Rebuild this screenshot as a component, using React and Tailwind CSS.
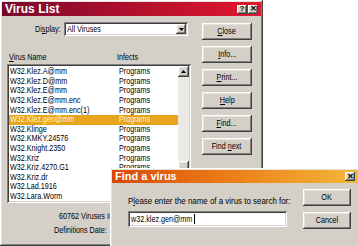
import React from 'react';

const RAISED = 'shadow-[inset_-1px_-1px_#404040,inset_1px_1px_#ffffff,inset_-2px_-2px_#808080,inset_2px_2px_#e4e2dc]';
const SUNKEN = 'shadow-[inset_1px_1px_#808080,inset_-1px_-1px_#ffffff,inset_2px_2px_#404040,inset_-2px_-2px_#d4d0c8]';

const VIRUSES = [
  'W32.Klez.A@mm',
  'W32.Klez.D@mm',
  'W32.Klez.E@mm',
  'W32.Klez.E@mm.enc',
  'W32.Klez.E@mm.enc(1)',
  'W32.Klez.gen@mm',
  'W32.Klinge',
  'W32.KMKY.24576',
  'W32.Knight.2350',
  'W32.Kriz',
  'W32.Kriz.4270.G1',
  'W32.Kriz.dr',
  'W32.Lad.1916',
  'W32.Lara.Worm',
];

// old screenshot text is narrow: squeeze it horizontally
function T({ children, center }) {
  return (
    <span className={`inline-block whitespace-nowrap scale-x-[0.8] ${center ? 'origin-center' : 'origin-left'}`}>
      {children}
    </span>
  );
}

function Btn({ children, className = '' }) {
  return (
    <div className={`flex items-center justify-center bg-[#d4d0c8] text-black ${RAISED} ${className}`}>
      <T center>{children}</T>
    </div>
  );
}

function TitleBtn({ children }) {
  return (
    <div className={`w-[10px] h-[9px] bg-[#d4d0c8] flex items-center justify-center text-[8px] font-bold leading-none text-black ${RAISED}`}>
      {children}
    </div>
  );
}

export default function App() {
  return (
    <div
      className="relative w-[358px] h-[246px] bg-white overflow-hidden text-[9px] leading-none text-black"
      style={{ fontFamily: '"Liberation Sans", Arial, sans-serif' }}
    >
      {/* Virus List window */}
      <div className={`w-[263px] h-[246px] bg-[#d4d0c8] p-[2px] flex flex-col ${RAISED}`}>
        <div className="h-[14px] flex items-center justify-between px-[3px] bg-gradient-to-r from-[#78082c] via-[#b0102c] to-[#e3162c]">
          <span className="text-white font-bold text-[12px] leading-none">Virus List</span>
          <div className="flex gap-[1px]">
            <TitleBtn>?</TitleBtn>
            <TitleBtn>✕</TitleBtn>
          </div>
        </div>

        <div className="flex flex-1">
          {/* left column */}
          <div className="w-[190px] flex flex-col pl-[5px]">
            <div className="flex items-center mt-[6px] h-[14px]">
              <div className="w-[57px] pl-[28px]">
                <T>Di<u>s</u>play:</T>
              </div>
              <div className={`w-[124px] h-[14px] bg-white flex items-center justify-between pl-[3px] pr-[2px] ${SUNKEN}`}>
                <T>All Viruses</T>
                <div className={`w-[10px] h-[10px] bg-[#d4d0c8] flex items-center justify-center ${RAISED}`}>
                  <svg width="5" height="3" viewBox="0 0 5 3"><path d="M0 0h5L2.5 3z" fill="#000" /></svg>
                </div>
              </div>
            </div>

            <div className="flex mt-[16px] h-[11px] items-center">
              <div className="w-[110px] pl-[2px]"><T><u>V</u>irus Name</T></div>
              <T>Infects</T>
            </div>

            <div className={`mt-[1px] h-[139px] w-[184px] bg-white p-[2px] flex ${SUNKEN}`}>
              <div className="flex-1 pt-[1px] overflow-hidden">
                {VIRUSES.map((v, i) => (
                  <div
                    key={v}
                    className={`flex h-[9.6px] items-center ${i === 5 ? 'bg-[#e8a41c] text-[#fff4d8]' : ''}`}
                  >
                    <div className="w-[110px] pl-[1px]"><T>{v}</T></div>
                    <T>Programs</T>
                  </div>
                ))}
              </div>
              <div className="w-[11px] flex flex-col bg-[#ebe9e4]">
                <div className={`h-[11px] bg-[#d4d0c8] flex items-center justify-center ${RAISED}`}>
                  <svg width="5" height="3" viewBox="0 0 5 3"><path d="M2.5 0L5 3H0z" fill="#000" /></svg>
                </div>
                <div className="flex-1" />
                <div className={`h-[10px] bg-[#d4d0c8] ${RAISED}`} />
                <div className="h-[30px]" />
              </div>
            </div>

            <div className="mt-[9px] ml-[47px] flex flex-col gap-[5px]">
              <div className="pl-[5px]"><T>60762 Viruses In List</T></div>
              <div><T>Definitions Date:</T></div>
            </div>
          </div>

          {/* buttons */}
          <div className="flex flex-col gap-[6px] pt-[7px] pl-[10px]">
            <Btn className="w-[50px] h-[17px]"><u>C</u>lose</Btn>
            <Btn className="w-[50px] h-[17px]"><u>I</u>nfo...</Btn>
            <Btn className="w-[50px] h-[17px]"><u>P</u>rint...</Btn>
            <Btn className="w-[50px] h-[17px]"><u>H</u>elp</Btn>
            <Btn className="w-[50px] h-[17px]"><u>F</u>ind...</Btn>
            <Btn className="w-[50px] h-[17px]">Find <u>n</u>ext</Btn>
          </div>
        </div>
      </div>

      {/* Find a virus dialog */}
      <div className={`absolute left-[110px] top-[168px] w-[250px] h-[84px] bg-[#d4d0c8] p-[2px] flex flex-col ${RAISED}`}>
        <div className="h-[13px] flex items-center justify-between px-[3px] bg-gradient-to-r from-[#d84808] via-[#ec8018] to-[#f2b838]">
          <span className="text-white font-bold text-[11px] leading-none">Find a virus</span>
          <TitleBtn>✕</TitleBtn>
        </div>
        <div className="flex flex-1">
          <div className="w-[172px] flex flex-col pl-[16px] pt-[14px]">
            <span className="inline-block whitespace-nowrap origin-left scale-x-[0.88]">
              P<u>l</u>ease enter the name of a virus to search for:
            </span>
            <div className={`mt-[5px] w-[159px] h-[16px] bg-white flex items-center pl-[3px] ${SUNKEN}`}>
              <T>w32.klez.gen@mm</T>
              <span className="w-[1px] h-[10px] bg-black -ml-[14px]" />
            </div>
          </div>
          <div className="flex flex-col gap-[6px] pt-[6px] ml-auto pr-[7px]">
            <Btn className="w-[48px] h-[17px]">OK</Btn>
            <Btn className="w-[48px] h-[17px]">Cancel</Btn>
          </div>
        </div>
      </div>
    </div>
  );
}
